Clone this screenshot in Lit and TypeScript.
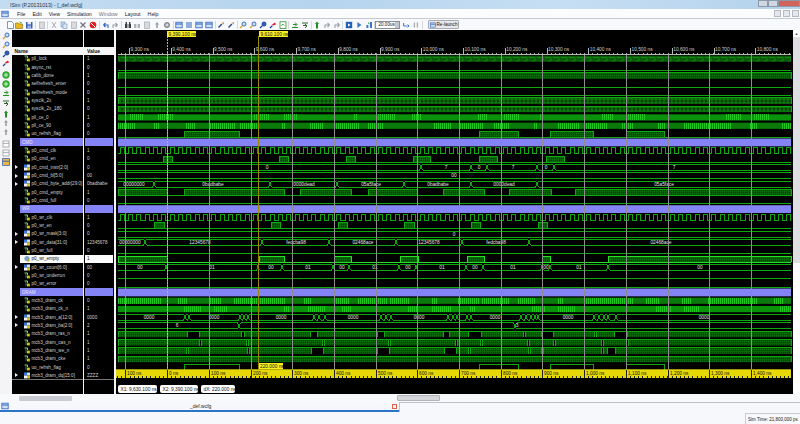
import { LitElement, html, css, svg } from "lit";
import { customElement } from "lit/decorators.js";

type Row = [string, string, "s" | "b" | "g"];

const ROWS: Row[] = [
  ["pll_lock", "1", "s"], ["async_rst", "0", "s"], ["calib_done", "1", "s"],
  ["selfrefresh_enter", "0", "s"], ["selfrefresh_mode", "0", "s"], ["sysclk_2x", "1", "s"],
  ["sysclk_2x_180", "0", "s"], ["pll_ce_0", "1", "s"], ["pll_ce_90", "0", "s"],
  ["uo_refrsh_flag", "0", "s"], ["CMD", "", "g"], ["p0_cmd_clk", "1", "s"],
  ["p0_cmd_en", "0", "s"], ["p0_cmd_instr[2:0]", "0", "b"], ["p0_cmd_bl[5:0]", "00", "b"],
  ["p0_cmd_byte_addr[29:0]", "0badbabe", "b"], ["p0_cmd_empty", "1", "s"], ["p0_cmd_full", "0", "s"],
  ["WR", "", "g"], ["p0_wr_clk", "1", "s"], ["p0_wr_en", "0", "s"],
  ["p0_wr_mask[3:0]", "0", "b"], ["p0_wr_data[31:0]", "12345678", "b"], ["p0_wr_full", "0", "s"],
  ["p0_wr_empty", "1", "s"], ["p0_wr_count[6:0]", "00", "b"], ["p0_wr_underrun", "0", "s"],
  ["p0_wr_error", "0", "s"], ["DRAM", "", "g"], ["mcb3_dram_ck", "0", "s"],
  ["mcb3_dram_ck_n", "1", "s"], ["mcb3_dram_a[12:0]", "0000", "b"], ["mcb3_dram_ba[2:0]", "2", "b"],
  ["mcb3_dram_ras_n", "1", "s"], ["mcb3_dram_cas_n", "1", "s"], ["mcb3_dram_we_n", "1", "s"],
  ["mcb3_dram_cke", "1", "s"], ["uo_refrsh_flag", "0", "s"], ["mcb3_dram_dq[15:0]", "ZZZZ", "b"],
];

const X0 = 117;
const X1 = 790;
const cy = (i: number) => 59 + 8.333 * i;

// --- small icons, 8x8 ---
const ICONS: Record<string, unknown> = {
  doc: svg`<path d="M1.5 .5h4l2 2v5h-6z" fill="#fff" stroke="#5a7fb0" stroke-width=".8"/>`,
  folder: svg`<path d="M.5 2h3l1 1h3v4.5h-7z" fill="#e8b820" stroke="#8a6a10" stroke-width=".6"/><path d="M4 .5l3 1-1 1z" fill="#30a030"/>`,
  save: svg`<rect x="1" y="1" width="6.5" height="6.5" fill="#3a62b8"/><rect x="2.5" y="1" width="3.5" height="2.4" fill="#dfe6f5"/><rect x="2.5" y="4.6" width="3.5" height="2.9" fill="#9db4e0"/>`,
  gray: svg`<rect x="1.5" y="1" width="5" height="6.5" fill="#d8dade" stroke="#a8acb2" stroke-width=".7"/>`,
  cut: svg`<path d="M2 1l4 6M6 1L2 7" stroke="#a8acb2" stroke-width="1" fill="none"/>`,
  copy: svg`<rect x="1" y="1" width="4" height="5" fill="#c6d8ee" stroke="#6f8fc0" stroke-width=".6"/><rect x="3" y="3" width="4" height="4.5" fill="#dce8f6" stroke="#6f8fc0" stroke-width=".6"/>`,
  x: svg`<path d="M1.5 1.5l5 5M6.5 1.5l-5 5" stroke="#70747c" stroke-width="1.2"/>`,
  no: svg`<circle cx="4" cy="4" r="3.3" fill="#e02020"/><path d="M2 2l4 4" stroke="#fff" stroke-width="1"/>`,
  undo: svg`<path d="M1.5 4h4.5v3M1.5 4l2-2M1.5 4l2 2" stroke="#2a62c0" stroke-width="1.1" fill="none"/>`,
  redo: svg`<path d="M6.5 4H2v3M6.5 4l-2-2M6.5 4l-2 2" stroke="#9a9ea6" stroke-width="1.1" fill="none"/>`,
  bino: svg`<path d="M1 3h2.4v4H1zM4.6 3H7v4H4.6zM1.6 1h1.4v2H1.6zM5 1h1.4v2H5z" fill="#3a3f4a"/>`,
  binog: svg`<path d="M1 3h2.4v4H1zM4.6 3H7v4H4.6z" fill="#b0b4ba"/>`,
  gear: svg`<circle cx="4" cy="4" r="2.6" fill="#a8acb2" stroke="#70747c" stroke-width=".8"/><circle cx="4" cy="4" r=".9" fill="#eee"/>`,
  win: svg`<rect x=".8" y="1.2" width="6.4" height="5.6" fill="#cfe0f5" stroke="#2a62c0" stroke-width=".8"/><path d="M1 3h6" stroke="#2a62c0" stroke-width="1"/>`,
  lines: svg`<path d="M1 2h6M1 4h6M1 6h6" stroke="#2a62c0" stroke-width="1"/>`,
  tool: svg`<path d="M1.5 6.5l3.4-3.4" stroke="#2a4a90" stroke-width="1.4"/><path d="M4.6 1.6l2 2 .6-2z" fill="#c08020"/>`,
  zoom: svg`<circle cx="5" cy="3" r="2" fill="#cfe0f5" stroke="#2a62c0" stroke-width=".9"/><path d="M3.4 4.6L1 7" stroke="#d0a020" stroke-width="1.3"/>`,
  zoomr: svg`<circle cx="5" cy="3" r="2" fill="#2a62c0" stroke="#20408c" stroke-width=".9"/><path d="M3.4 4.6L1 7" stroke="#2040a0" stroke-width="1.3"/>`,
  zoomx: svg`<path d="M3 3.5l3-2 1 2-3 1z" fill="#e02020"/><path d="M3.4 4.6L1 7" stroke="#2040a0" stroke-width="1.3"/>`,
  gdoc: svg`<rect x="1" y=".8" width="6" height="6.6" fill="#fff" stroke="#309030" stroke-width=".8"/><path d="M2.4 5l1.4-2 1.6 1.6" stroke="#309030" stroke-width=".8" fill="none"/>`,
  ok: svg`<circle cx="4" cy="4" r="3.4" fill="#38b838" stroke="#1c801c" stroke-width=".5"/><path d="M2 4h4M4 2v4" stroke="#c8f0c8" stroke-width="1"/>`,
  garrow: svg`<path d="M1 6.5h6M2 3.5h3.5M4 1.5l2 2-2 2" stroke="#209020" stroke-width="1" fill="none"/>`,
  darrow: svg`<path d="M1 2h6M2 4.5h3.5M4 3l2 2-2 2" stroke="#306030" stroke-width="1" fill="none"/>`,
  up: svg`<path d="M4 .6l2 2.4H5v4.4H3V3H2z" fill="#209020"/>`,
  upg: svg`<path d="M4 1l2 2.4H4.8v3.6H3.2V3.4H2z" fill="#9a9ea6"/>`,
  run: svg`<rect x=".8" y=".8" width="6.4" height="6.4" fill="#2060b8"/><path d="M3 2.4l2.6 1.6L3 5.6z" fill="#fff"/>`,
  play: svg`<path d="M2.4 1l4 3-4 3z" fill="#3a78d0"/>`,
  bars: svg`<path d="M5 1h2v6H5zM1.4 4h2v3h-2z" fill="#3a78d0"/><path d="M3 1.8l1.6 1" stroke="#209020"/>`,
  rel: svg`<path d="M1.6 2v3h4M5.6 3.4L7 5 5.6 6.4" stroke="#3a78d0" stroke-width="1" fill="none"/>`,
  pause: svg`<path d="M2.4 1.4v5M5.4 1.4v5" stroke="#a8acb2" stroke-width="1.3"/>`,
  pane: svg`<rect x="1" y="1" width="6" height="6" fill="#fff" stroke="#8a8e96" stroke-width=".7"/><path d="M1 3.4h6" stroke="#8a8e96" stroke-width=".7"/>`,
  panes: svg`<rect x=".6" y=".6" width="6.8" height="6.8" fill="#e8b840" stroke="#3a62b8" stroke-width=".8"/><path d="M1 3.2h6" stroke="#3a62b8"/>`,
};

const icon = (k: string) => html`<svg class="ic" viewBox="0 0 8 8">${ICONS[k]}</svg>`;

const TOOL_GROUPS = [
  ["doc", "folder", "save"], ["gray"], ["cut", "copy", "gray", "x", "no"], ["undo", "redo"],
  ["bino", "binog", "gray", "upg", "gear"], ["win", "lines", "win", "win"], ["tool", "tool"],
  ["zoom", "zoom", "zoomr", "zoomx", "gdoc"], ["garrow", "darrow"], ["up", "redo", "redo"],
  ["run", "play", "bars"],
];

const SIDE = ["zoom", "zoom", "zoomr", "zoomx", "ok", "ok", "garrow", "darrow", "up", "upg", "upg", "pane", "pane", "panes"];

@customElement("wave-view")
class WaveView extends LitElement {
  static styles = css`
    :host { display: block; width: 677px; height: 364px; background: #000; flex: none; }
    svg { display: block; }
    .crisp { shape-rendering: crispEdges; }
    .w { fill: none; stroke: #0ca80c; stroke-width: 1; }
    .hot { fill: none; stroke: #26e026; stroke-width: 1; }
    .dim { fill: none; stroke: #1fc41f; stroke-width: 1; }
    .grid { stroke: #8e8e8e; stroke-width: 1; }
    .tick { fill: none; stroke: #b8b8b8; stroke-width: 1; }
    .ytick { fill: none; stroke: #222; stroke-width: 1; }
    .group { fill: #8484f6; }
    .ruler { fill: #e6d806; }
    .flag { fill: #f8f020; }
    .c1 { stroke: #e0c400; stroke-width: 1; stroke-dasharray: 2 1; }
    .c2 { stroke: #9a8a00; stroke-width: 1.5; }
    .pill { fill: #fff; }
    text { font-family: "Liberation Sans", Arial, sans-serif; font-size: 4.8px; }
    .sig { fill: #e4e4e4; text-anchor: middle; }
    .top { fill: #cfcfcf; }
    .blk { fill: #111; }
    .hollow { fill: #000; }
    .p-key { fill: url(#key); }
    .p-dense { fill: url(#dense); }
    .p-check { fill: url(#check); }
    .s-dim { fill: #0a7a0a; }
    .s-mid { fill: #0a920a; }
  `;

  private line: string[] = [];
  private hot: string[] = [];
  private bright: string[] = [];
  private fills: { x: number; y: number; w: number; c: string }[] = [];
  private labels: { x: number; y: number; t: string }[] = [];

  private low(i: number, a: number, b: number, out = this.line) {
    out.push(`M${a} ${(cy(i) + 3.2).toFixed(1)}H${b}`);
  }

  private band(i: number, a: number, b: number, c = "p-dense", out = this.line) {
    const c0 = cy(i);
    this.fills.push({ x: a, y: c0 - 3, w: b - a, c });
    out.push(`M${a} ${(c0 + 3.2).toFixed(1)}V${(c0 - 3).toFixed(1)}H${b}V${(c0 + 3.2).toFixed(1)}`);
  }

  // low line with filled pulses
  private pulses(i: number, list: number[][], c = "p-dense", out = this.line) {
    this.low(i, X0, X1, out);
    list.forEach(([a, b]) => this.band(i, a, b, c, out));
  }

  // filled band with notches where the line sits on top
  private notched(i: number, gaps: number[][]) {
    let x = X0;
    const c0 = cy(i);
    gaps.forEach(([a, b]) => {
      this.band(i, x, a);
      this.line.push(`M${a} ${(c0 - 3).toFixed(1)}H${b}`);
      x = b;
    });
    this.band(i, x, X1);
  }

  private bus(i: number, cuts: number[], texts: [number, string][]) {
    const c0 = cy(i);
    const t = (c0 - 3).toFixed(1);
    const b = (c0 + 3).toFixed(1);
    const pts = [X0, ...cuts, X1];
    for (let k = 0; k < pts.length - 1; k++) {
      const a = pts[k] + (k ? 1.5 : 0);
      const e = pts[k + 1] - (k < pts.length - 2 ? 1.5 : 0);
      this.line.push(`M${a} ${t}H${e}M${a} ${b}H${e}`);
      if (k < pts.length - 2) this.line.push(`M${e} ${t}L${e + 3} ${b}M${e} ${b}L${e + 3} ${t}`);
    }
    texts.forEach(([x, s]) => this.labels.push({ x, y: c0 + 1.7, t: s }));
  }

  private clock(i: number) {
    const c0 = cy(i);
    let d = `M${X0} ${(c0 + 3).toFixed(1)}`;
    for (let x = X0 + 2; x < X1 - 4; x += 8.333) {
      d += `H${x.toFixed(1)}V${(c0 - 3).toFixed(1)}H${(x + 4.17).toFixed(1)}V${(c0 + 3).toFixed(1)}`;
    }
    this.line.push(d + `H${X1}`);
  }

  private stripes(i: number, c: string, f: (x: number) => boolean) {
    const c0 = cy(i);
    this.fills.push({ x: X0, y: c0 - 3, w: X1 - X0, c });
    for (let x = X0; x < X1; x += 2) {
      if (f(x)) this.bright.push(`M${x + 0.5} ${(c0 - 3).toFixed(1)}V${(c0 + 3).toFixed(1)}`);
    }
  }

  private build() {
    this.line = []; this.hot = []; this.bright = []; this.fills = []; this.labels = [];
    const beat = (x: number) => Math.sin(x / 5) + Math.sin(x / 19);
    this.fills.push({ x: X0, y: cy(0) - 3.4, w: X1 - X0, c: "p-key" });
    this.low(1, X0, X1);
    this.band(2, X0, X1);
    this.low(3, X0, X1);
    this.low(4, X0, X1);
    this.band(5, X0, X1, "p-check");
    this.band(6, X0, X1, "p-check");
    this.stripes(7, "s-mid", (x) => beat(x) > 0.7);
    this.stripes(8, "s-dim", (x) => beat(x + 40) > 0);
    this.pulses(9, [[183, 238], [478, 517], [549, 592], [625, 663]]);
    this.clock(11);
    this.pulses(12, [[162, 171], [278, 287], [345, 354], [412, 429], [478, 496], [545, 563]]);
    this.bus(13, [420, 470, 486, 536, 553], [[266, "0"], [445, "7"], [478, "0"], [512, "7"], [545, "0"], [673, "7"]]);
    this.bus(14, [], [[453, "00"]]);
    this.bus(15, [153, 269, 336, 403, 470, 536], [[133, "00000000"], [212, "0badbabe"], [303, "0000dead"], [370, "05a5face"], [437, "0badbabe"], [503, "0000dead"], [663, "05a5face"]]);
    this.pulses(16, [[X0, 166], [183, 283], [299, 350], [367, 416], [442, 483], [508, 550], [574, X1]]);
    this.low(17, X0, X1);
    this.clock(19);
    this.pulses(20, [[153, 163], [270, 279], [337, 346], [403, 413], [470, 479], [537, 546]]);
    this.bus(21, [], [[453, "0"]]);
    this.bus(22, [144, 261, 328, 395, 461, 528], [[129, "00000000"], [199, "12345678"], [295, "fedcba98"], [362, "02468ace"], [428, "12345678"], [495, "fedcba98"], [660, "02468ace"]]);
    this.low(23, X0, X1);
    this.pulses(24, [[X0, 166], [258, 283], [333, 350], [399, 417], [466, 483], [541, 549], [607, X1]], "p-dense", this.hot);
    this.bus(25, [165, 257, 281, 332, 348, 398, 415, 465, 482, 541, 549, 607],
      [[139, "00"], [211, "01"], [270, "00"], [307, "01"], [341, "00"], [374, "01"], [407, "00"], [441, "01"], [474, "00"], [512, "01"], [545, "00"], [578, "01"], [699, "00"]]);
    this.low(26, X0, X1);
    this.low(27, X0, X1);
    this.stripes(29, "s-dim", (x) => beat(x + 15) > -0.2);
    this.stripes(30, "s-mid", (x) => beat(x + 70) > 0.6);
    this.bus(31, [184, 188, 239, 243, 247, 313, 318, 324, 380, 385, 390, 447, 452, 456, 466, 470, 520, 525, 530, 534, 537, 593, 598, 603, 607, 615],
      [[148, "0000"], [213, "0000"], [280, "0000"], [352, "0000"], [418, "0000"], [494, "0000"], [567, "0000"], [703, "0000"]]);
    this.bus(32, [238, 514], [[176, "6"], [516, "3"]]);
    this.notched(33, [[186, 198], [240, 243], [309, 316], [376, 383], [442, 448], [467, 480], [522, 524], [540, 552], [593, 595], [613, 626]]);
    this.notched(34, [[198, 200], [245, 247], [321, 323], [387, 389], [454, 456], [479, 481], [526, 528], [552, 554], [600, 602], [625, 627]]);
    this.notched(35, [[185, 187], [246, 248], [310, 322], [376, 388], [443, 455], [467, 469], [527, 529], [540, 542], [600, 602], [606, 614]]);
    this.band(36, X0, X1);
    this.low(37, X0, X1);
    [[183, 238], [478, 517], [549, 592], [625, 663]].forEach(([a, b]) => this.band(37, a, b, "hollow"));
  }

  render() {
    this.build();
    const majors = Array.from({ length: 16 }, (_, k) => 128 + 41.75 * k);
    const grids = Array.from({ length: 16 }, (_, k) => Math.round(124.4 + 41.7 * k));
    let top = `M${X0} 54H${X1}`;
    let bot = "";
    for (let x = 128 - 8 * 4.175; x < X1; x += 4.175) {
      const t = Math.round(x) + 0.5;
      if (t > X0) top += `M${t} 52.5V54`;
    }
    majors.forEach((x) => { top += `M${Math.round(x) + 0.5} 47.5V54`; });
    for (let x = 116; x < X1; x += 4.17) bot += `M${Math.round(x) + 0.5} 376.4V378`;
    grids.forEach((x) => { bot += `M${x + 0.5} 370V378`; });
    const topNames = ["9,300", "9,400", "9,500", "9,600", "9,700", "9,800", "9,900", "10,000", "10,100", "10,200", "10,300", "10,400", "10,500", "10,600", "10,700", "10,800"];
    const botNames = ["100", "0", "100", "200", "300", "400", "500", "600", "700", "800", "900", "1,000", "1,100", "1,200", "1,300", "1,400"];
    const pills: [number, number, string][] = [[117, 39, "X1: 9,630.100 ns"], [159, 38, "X2: 9,390.100 ns"], [200, 34, "dX: 220.000 ns"]];
    const groups = ROWS.map((r, i) => (r[2] === "g" ? i : -1)).filter((i) => i >= 0);
    return html`<svg viewBox="115 30 677 364" width="677" height="364">
      <defs>
        <pattern id="key" width="8" height="7" patternUnits="userSpaceOnUse">
          <rect width="8" height="7" fill="#0b590b"></rect>
          <path d="M0 1.5H6V5H3" fill="none" stroke="#0c8a0c" stroke-width="1"></path>
        </pattern>
        <pattern id="dense" width="2" height="2" patternUnits="userSpaceOnUse">
          <rect width="2" height="2" fill="#0a5e0a"></rect>
          <rect width="1" height="1" fill="#073f07"></rect>
          <rect x="1" y="1" width="1" height="1" fill="#0b6a0b"></rect>
        </pattern>
        <pattern id="check" width="4" height="4" patternUnits="userSpaceOnUse">
          <rect width="4" height="4" fill="#0a680a"></rect>
          <rect width="2" height="2" fill="#074507"></rect>
          <rect x="2" y="2" width="2" height="2" fill="#0b7a0b"></rect>
        </pattern>
      </defs>
      ${this.fills.map((f) => svg`<rect class="${f.c}" x="${f.x}" y="${f.y}" width="${f.w}" height="6.2"></rect>`)}
      ${groups.map((i) => svg`<rect class="group" x="${X0}" y="${cy(i) - 3.8}" width="${X1 - X0}" height="7.8"></rect>`)}
      <path class="w crisp" d="${this.line.join("")}"></path>
      <path class="hot crisp" d="${this.hot.join("")}"></path>
      <path class="dim crisp" d="${this.bright.join("")}"></path>
      ${this.labels.map((l) => svg`<text class="sig" x="${l.x}" y="${l.y}">${l.t}</text>`)}
      ${grids.map((x) => svg`<path class="grid crisp" d="M${x + 0.5} 53V369"></path>`)}
      <path class="tick crisp" d="${top}"></path>
      ${majors.map((x, k) => svg`<text class="top" x="${x + 1.5}" y="51">${topNames[k]} ns</text>`)}
      <path class="c1 crisp" d="M166.5 36V369"></path>
      <path class="c2 crisp" d="M257.5 36V369"></path>
      <rect class="flag" x="166" y="31" width="29" height="6"></rect>
      <text class="blk" x="167.5" y="35.8">9,390.100 ns</text>
      <rect class="flag" x="258" y="31" width="29" height="6"></rect>
      <text class="blk" x="259.5" y="35.8">9,610.100 ns</text>
      <rect class="flag" x="258" y="363" width="24" height="6.3"></rect>
      <text class="blk" x="259" y="368">220.000 ns</text>
      <rect class="ruler" x="115" y="369.3" width="675" height="8.7"></rect>
      <path class="ytick crisp" d="${bot}"></path>
      ${grids.map((x, k) => svg`<text class="blk" x="${x + 2}" y="375">${botNames[k]} ns</text>`)}
      ${pills.map(([x, w, t]) => svg`<rect class="pill" x="${x}" y="385" width="${w}" height="8" rx="2"></rect>
        <text class="blk" x="${x + 2.5}" y="390.7">${t}</text>`)}
    </svg>`;
  }
}

@customElement("app-root")
export class AppRoot extends LitElement {
  static styles = css`
    :host {
      display: flex; flex-direction: column; width: 800px; height: 424px; overflow: hidden;
      background: #f7f8fb; font-family: "Liberation Sans", Arial, sans-serif; color: #222;
    }
    .ic { width: 8px; height: 8px; display: block; flex: none; }
    .title {
      height: 9px; flex: none; display: flex; align-items: center; padding-left: 10px;
      background: linear-gradient(90deg, #c4dcf2, #b6d4ee 40%, #c6def3 70%, #b4d2ec);
      font-size: 5.2px; color: #2a3440;
    }
    .winbtns { margin-left: auto; display: flex; height: 7px; align-self: flex-start; }
    .winbtn { width: 10px; background: #cfd8e2; border: 1px solid #8d99a8; box-sizing: border-box; }
    .winbtn.close { width: 22px; background: #d0645a; }
    .menu {
      height: 9px; flex: none; display: flex; align-items: center; gap: 7px; padding-left: 1px;
      font-size: 5.3px; background: #fbfcfe; border-bottom: 1px solid #c6cad0;
    }
    .menu .ic { margin-right: 1px; }
    .off { color: #777; }
    .mdi { margin-left: auto; display: flex; gap: 2px; padding-right: 1px; }
    .mdi i { width: 7px; height: 7px; background: #e4e8ee; border: 1px solid #b4bac2; box-sizing: border-box; }
    .tools {
      height: 11px; flex: none; display: flex; align-items: center; padding-left: 4px;
      background: #f8f9fc; font-size: 4.6px;
    }
    .tgroup { display: flex; gap: 1.9px; padding: 0 1.6px; border-right: 1px solid #d4d6da; }
    .combo {
      width: 25px; height: 8px; box-sizing: border-box; border: 1px solid #8a8e96; background: #fff;
      display: flex; align-items: center; justify-content: space-between; padding-left: 2px; color: #111;
    }
    .combo b { width: 4px; height: 100%; background: #c4c8ce; }
    .relaunch {
      margin-left: 5px; height: 9px; width: 31px; box-sizing: border-box; display: flex; align-items: center;
      gap: 1px; padding-left: 1px; border: 1px solid #a8acb2; border-radius: 1px; background: #e6e8ec; color: #111;
    }
    .relaunch .ic { width: 6px; height: 6px; }
    .main { height: 364px; flex: none; display: flex; background: #f4f4f6; }
    .side {
      width: 11.5px; flex: none; display: flex; flex-direction: column; align-items: center;
      gap: 1.3px; padding-top: 1.5px; box-sizing: border-box;
    }
    .side .ic:nth-child(5) { margin-top: 2px; }
    .side .ic:nth-child(9) { margin-top: 2px; }
    .side .ic:nth-child(12) { margin-top: 2px; }
    .col { background: #000; padding-top: 16.5px; box-sizing: border-box; flex: none; }
    .names { width: 71px; margin-right: 1.5px; }
    .values { width: 30px; margin-right: 1.5px; }
    .head {
      height: 8.3px; background: #f6f6f6; color: #111; font-size: 5px; font-weight: bold;
      display: flex; align-items: center; padding-left: 3px; box-sizing: border-box;
    }
    .row {
      height: 8.333px; display: flex; align-items: center; font-size: 4.6px; color: #cfcfcf;
      white-space: nowrap; overflow: hidden; position: relative;
    }
    .names .row { padding-left: 12.5px; gap: 1.5px; }
    .values .row { padding-left: 3px; }
    .row.g { background: #8484f6; color: #e8e8ff; margin-left: 8.5px; padding-left: 2px; height: 7.8px; margin-top: .27px; margin-bottom: .27px; }
    .values .row.g { margin-left: 1px; margin-right: 1px; }
    .row.sel { background: #fbfbfb; color: #111; margin-left: 8.5px; padding-left: 4px; }
    .values .row.sel { margin-left: 1px; margin-right: 1px; padding-left: 2px; }
    .row .tw {
      position: absolute; left: 3.5px; width: 0; height: 0;
      border-left: 3px solid #eee; border-top: 2px solid transparent; border-bottom: 2px solid transparent;
    }
    .row .sym { width: 6px; height: 7px; flex: none; display: block; }
    .rule { border-top: 1px solid #777; margin-top: -.6px; }
    .vscroll {
      width: 8px; flex: none; display: flex; flex-direction: column; background: #fdfdfd;
    }
    .vscroll .btn { height: 7px; background: #fff; color: #555; font-size: 4px; text-align: center; line-height: 7px; }
    .vscroll .thumb { height: 226px; background: #dddfe2; }
    .hbar { height: 8px; flex: none; display: flex; align-items: center; background: #f8f9fb; }
    .hbar i { display: block; height: 5px; background: #c9ccd2; border-radius: 1px; }
    .hbar .t1 { margin-left: 19px; width: 53px; }
    .hbar .t2 { margin-left: 325px; width: 43px; height: 6px; border: 1px solid #b0b4ba; box-sizing: border-box; background: #d4d6da; }
    .tabs { height: 10px; flex: none; display: flex; }
    .tab {
      width: 399px; flex: none; box-sizing: border-box; border-bottom: 2px solid #2a76c4; display: flex;
      align-items: center; font-size: 5px; color: #222; padding-left: 1px;
    }
    .tab span { margin-left: 181px; }
    .tab i { margin-left: auto; margin-right: 2px; width: 5px; height: 5px; background: #f4f4f4; border: 1px solid #e0604a; box-sizing: border-box; }
    .tabrest { flex: 1; border-top: 1px solid #bfc2c8; border-left: 1px solid #bfc2c8; }
    .status { flex: 1; display: flex; justify-content: flex-end; align-items: flex-end; }
    .status div {
      width: 55px; height: 11px; box-sizing: border-box; border: 1px solid #c8cad0; border-width: 1px 0 0 1px;
      font-size: 4.5px; display: flex; align-items: center; padding-left: 2px; color: #222; white-space: nowrap;
    }
  `;

  private sym(r: Row, sel: boolean) {
    if (r[2] === "b") {
      return html`<svg class="sym" viewBox="0 0 6 7">
        <rect x="0" y=".5" width="3" height="3" fill="#3a78e0"></rect>
        <rect x="3" y=".5" width="3" height="3" fill="#cfe0ff"></rect>
        <rect x="0" y="3.5" width="3" height="3" fill="#f4f4f4"></rect>
        <rect x="3" y="3.5" width="3" height="3" fill="#e0c020"></rect>
      </svg>`;
    }
    if (sel) {
      return html`<svg class="sym" viewBox="0 0 6 7"><circle cx="3" cy="3.5" r="2.6" fill="#7aa6c8"></circle><rect x="3" y="4" width="2.4" height="2.6" fill="#c0a820"></rect></svg>`;
    }
    return html`<svg class="sym" viewBox="0 0 6 7">
      <path d="M.5 1h3v2" fill="none" stroke="#7fd07f" stroke-width="1"></path>
      <path d="M2 1v5" stroke="#3c8a3c" stroke-width=".9"></path>
      <rect x="3" y="3.6" width="2.8" height="2.8" fill="#d8c020"></rect>
    </svg>`;
  }

  render() {
    return html`
      <div class="title">
        <span>ISim (P.20131013) - [_def.wcfg]</span>
        <div class="winbtns"><div class="winbtn"></div><div class="winbtn"></div><div class="winbtn close"></div></div>
      </div>
      <div class="menu">
        ${icon("win")}
        <span>File</span><span>Edit</span><span>View</span><span>Simulation</span>
        <span class="off">Window</span><span>Layout</span><span>Help</span>
        <div class="mdi"><i></i><i></i><i></i></div>
      </div>
      <div class="tools">
        ${TOOL_GROUPS.map((g) => html`<div class="tgroup">${g.map(icon)}</div>`)}
        <div class="combo">20.00us<b></b></div>
        <div class="tgroup">${icon("rel")}${icon("pause")}</div>
        <div class="relaunch">${icon("win")}Re-launch</div>
      </div>
      <div class="main">
        <div class="side">${SIDE.map(icon)}</div>
        <div class="col names">
          <div class="head">Name</div>
          ${ROWS.map((r, i) => {
            const sel = i === 24;
            return html`<div class="row ${r[2] === "g" ? "g" : ""} ${sel ? "sel" : ""}">
              ${r[2] === "b" ? html`<span class="tw"></span>` : ""}
              ${r[2] === "g" ? "" : this.sym(r, sel)}
              <span>${r[0]}</span>
            </div>`;
          })}
          <div class="rule"></div>
        </div>
        <div class="col values">
          <div class="head">Value</div>
          ${ROWS.map((r, i) => html`<div class="row ${r[2] === "g" ? "g" : ""} ${i === 24 ? "sel" : ""}">${r[1]}</div>`)}
          <div class="rule"></div>
        </div>
        <wave-view></wave-view>
        <div class="vscroll"><div class="btn">▲</div><div class="thumb"></div></div>
      </div>
      <div class="hbar"><i class="t1"></i><i class="t2"></i></div>
      <div class="tabs">
        <div class="tab">${icon("win")}<span>_def.wcfg</span><i></i></div>
        <div class="tabrest"></div>
      </div>
      <div class="status"><div>Sim Time: 21,800,000 ps</div></div>
    `;
  }
}
